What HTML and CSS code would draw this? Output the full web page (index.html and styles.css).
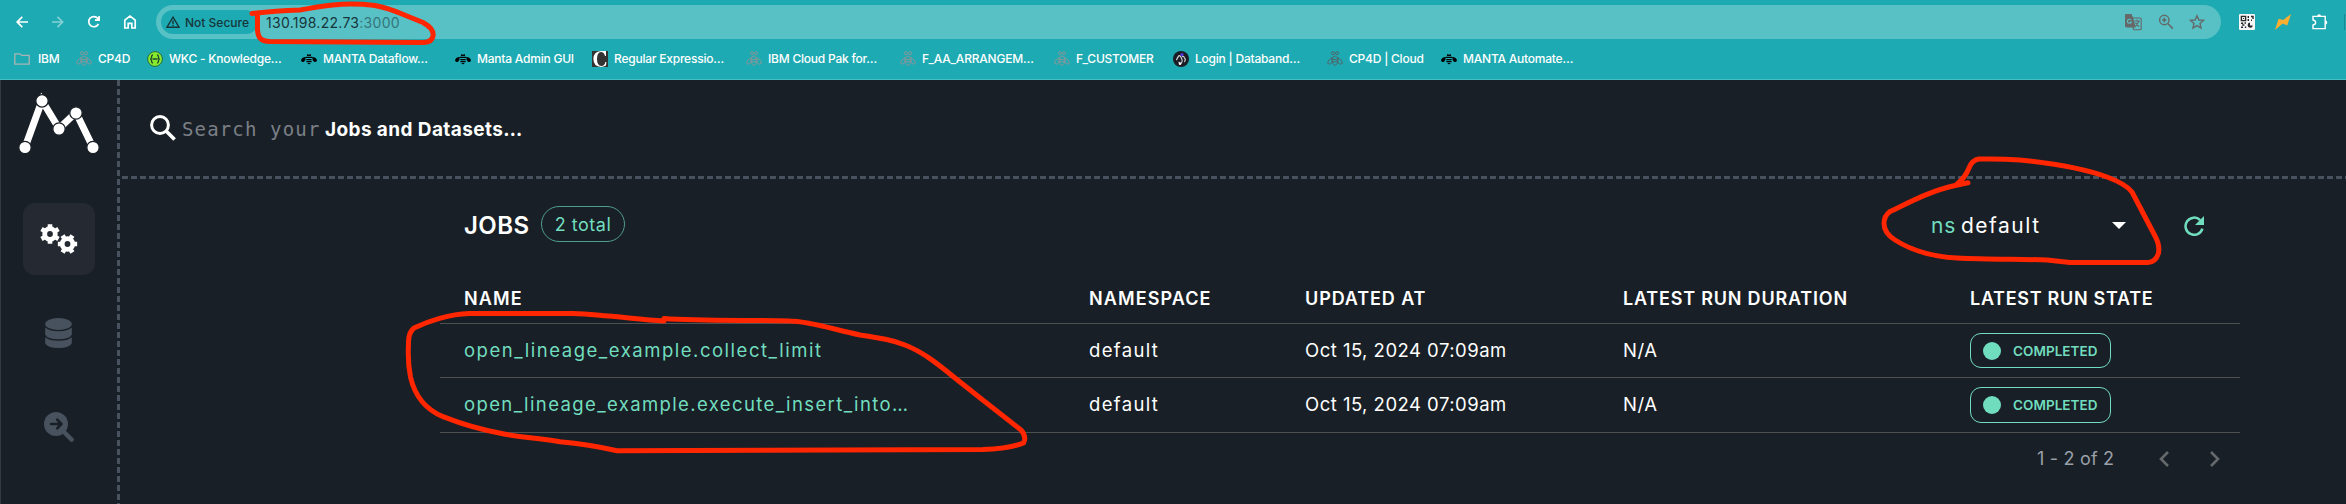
FILE: index.html
```html
<!DOCTYPE html>
<html lang="en">
<head>
<meta charset="utf-8">
<title>Marquez | Jobs</title>
<link rel="stylesheet" href="styles.css">
</head>
<body>
<svg class="defs" aria-hidden="true">
  <symbol id="bee" viewBox="0 0 16 16">
    <g fill="none" stroke="currentColor" stroke-width="1">
      <circle cx="5.9" cy="2.2" r="1.5"/><circle cx="10.1" cy="2.2" r="1.5"/>
      <path d="M5.7 6.2Q8 3.6 10.3 6.2V12.4Q8 16.2 5.7 12.4ZM5.7 8.4H10.3M5.7 10.8H10.3"/>
      <path d="M5 6.6Q.7 8.8.6 12.2Q2.8 14.6 4.9 11.6ZM11 6.6Q15.3 8.8 15.4 12.2Q13.2 14.6 11.1 11.6Z"/>
    </g>
  </symbol>
  <symbol id="manta" viewBox="0 0 16 16">
    <path fill="#000" d="M6 3.2H7.3L8 4.2L8.7 3.2H10V5H6ZM4.8 5.8H11.2V7H4.8ZM5.4 8H10.6V9.2H5.4ZM5.4 10.1H10.6V11.2H5.4ZM6.2 12H9.8L8 13.4ZM4.6 6Q.6 6.2 0 9.6Q1.2 12 3.2 10.6Q5 9 4.6 6ZM11.4 6Q15.4 6.2 16 9.6Q14.8 12 12.8 10.6Q11 9 11.4 6Z"/>
  </symbol>
  <symbol id="gear" viewBox="-10 -10 20 20">
    <circle r="5.3" fill="none" stroke="#fff" stroke-width="4.8"/>
    <path stroke="#fff" stroke-width="4.6" fill="none" d="M0-7V-9.8M0 7V9.8M6.06-3.5L8.5-4.9M-6.06-3.5L-8.5-4.9M6.06 3.5L8.5 4.9M-6.06 3.5L-8.5 4.9"/>
  </symbol>
</svg>

<header class="browser">
  <div class="toolbar">
    <nav class="nav-buttons">
      <svg viewBox="0 0 16 16"><path d="M14 8H3M8.3 2.9L3.2 8L8.3 13.1"/></svg>
      <svg class="faded" viewBox="0 0 16 16"><path d="M2 8H12.4M7.5 2.9L12.6 8L7.5 13.1"/></svg>
      <svg viewBox="0 0 16 16"><path d="M12.4 10A5.1 5.1 0 1 1 11.8 4.4L13 5.9M13.1 2V6.2H8.9"/></svg>
      <svg viewBox="0 0 16 16"><path d="M2.8 14V6.2L8 2.1L13.2 6.2V14H9.8V9.4H6.2V14Z"/></svg>
    </nav>
    <div class="omnibox">
      <span class="chip">
        <svg viewBox="0 0 14 12"><path d="M7 1.2L13 11.2H1Z"/><path d="M7 4.5V8M7 8.8V10"/></svg>
        Not Secure
      </span>
      <span class="url">130.198.22.73<span class="port">:3000</span></span>
      <span class="page-actions">
        <svg viewBox="0 0 17 17"><path fill="#66696a" d="M0 2Q0 0 2 0H6L7 3H0ZM0 3H7.4L10 13H2Q0 13 0 11Z"/><path d="M8 4H15.2Q16.2 4 16.2 5V14.8Q16.2 15.8 15.2 15.8H8.8L7.8 13M9.2 7H14.8M12 5.5V7M10.4 12.4L14 7.4M10.4 8.6L14.3 12.8"/><path class="light" d="M6 6A2 2 0 1 0 6.3 8H4.7"/></svg>
        <svg viewBox="0 0 16 16"><circle cx="6.3" cy="6" r="4.7"/><path stroke-width="1.7" d="M9.8 9.5L14.8 14.6M6.3 3.8V8.2M4.1 6H8.5"/></svg>
        <svg viewBox="0 0 16 16"><path d="M8 1.7L9.9 6L14.5 6.4L11 9.5L12 14L8 11.6L4 14L5 9.5L1.5 6.4L6.1 6Z"/></svg>
      </span>
    </div>
    <div class="extensions">
      <svg viewBox="0 0 16 16"><rect width="16" height="16" rx="1" fill="#f6f6f6"/><path fill="none" stroke="#26282a" stroke-width="1.4" d="M2.4 2.4H6.6V6.6H2.4ZM9.3 2V4M9.3 5V7M12 2.5H14V5M12 6.2H13M2 9.3H4.2M5.5 9H7M3.2 11H5.4M2 13.2H4M5.8 13.2H7.2"/><path fill="#26282a" d="M4 4H5V5H4ZM11 8.6A2.6 2.6 0 1 0 13.8 11.4H11Z"/></svg>
      <svg viewBox="0 0 16 16"><path fill="#fbae2f" d="M0 16L3.6 4.8L8.2 6L16 0L12.2 11.6L7.8 9.4Z"/></svg>
      <svg viewBox="0 0 16 16"><path fill="none" stroke="#fff" stroke-width="1.4" d="M1 2.4H13.2V14.6H1V11Q3.6 10.6 3.6 8.5Q3.6 6.4 1 6Z"/><path fill="#fff" d="M5.2 2.2A1.9 1.9 0 0 1 9 2.2ZM13.4 6.6A1.9 1.9 0 0 1 13.4 10.4Z"/></svg>
      <i class="avatar-edge"></i>
    </div>
  </div>
  <div class="bookmarks">
    <a class="bm w62"><svg viewBox="0 0 16 16"><path fill="none" stroke="#a9b5b4" stroke-width="1.3" d="M.8 2.8H6L7.6 4.4H15.2V13.2H.8Z"/></svg>IBM</a>
    <a class="bm w71"><svg class="bee"><use href="#bee"/></svg>CP4D</a>
    <a class="bm w154"><svg viewBox="0 0 16 16"><circle cx="8" cy="8" r="7.4" fill="#85ea2d" stroke="#256b45" stroke-width="1"/><path fill="none" stroke="#23492d" stroke-width="1.3" d="M6 4Q4.6 4 4.6 5.4Q4.6 8 3.2 8Q4.6 8 4.6 10.6Q4.6 12 6 12M10 4Q11.4 4 11.4 5.4Q11.4 8 12.8 8Q11.4 8 11.4 10.6Q11.4 12 10 12M5.5 8H10.6"/></svg>WKC - Knowledge…</a>
    <a class="bm w154"><svg><use href="#manta"/></svg>MANTA Dataflow…</a>
    <a class="bm w137"><svg><use href="#manta"/></svg>Manta Admin GUI</a>
    <a class="bm w154"><svg viewBox="0 0 16 16"><path fill="#333" d="M0 0H16V16H0Z"/><path fill="#fff" d="M14 0V5H13Q12 1 9 1Q5 1.4 5 8Q5 14.6 9.4 15Q12.6 15 13.4 11H14.4L14 14.6Q12 16 9 16Q1.4 15.4 1.4 8Q1.4 .6 9 0Z"/></svg>Regular Expressio…</a>
    <a class="bm w154"><svg class="bee"><use href="#bee"/></svg>IBM Cloud Pak for…</a>
    <a class="bm w154"><svg class="bee"><use href="#bee"/></svg>F_AA_ARRANGEM…</a>
    <a class="bm w119"><svg class="bee"><use href="#bee"/></svg>F_CUSTOMER</a>
    <a class="bm w154"><svg viewBox="0 0 16 16"><circle cx="8" cy="8" r="8" fill="#1c1c24"/><path fill="none" stroke="#cfcfd6" stroke-width="1.2" stroke-linecap="round" d="M3.6 8.6L5.2 5.6Q6.4 3.8 7.6 5.6L8.6 7.6Q9.6 9.6 9 10.8L8 12.2Q6.8 13 6 11.2M9.6 5.6Q10.6 5 11.4 6.8L12.4 8.6L11.6 10.6"/><circle cx="9" cy="3.5" r="1.5" fill="#5b36e8"/><circle cx="7" cy="12.8" r="1.3" fill="#fff"/></svg>Login | Databand…</a>
    <a class="bm w114"><svg class="bee dark"><use href="#bee"/></svg>CP4D | Cloud</a>
    <a class="bm w154"><svg><use href="#manta"/></svg>MANTA Automate…</a>
  </div>
</header>

<div class="app">
  <aside class="sidebar">
    <svg class="logo" viewBox="0 0 80 60"><path fill="none" stroke="#fff" stroke-width="7" d="M6 52.5L23 5.5L40 33.5L57 17.5L74 52.5"/><g fill="#fff" stroke="#191f26" stroke-width="1.3"><circle cx="6" cy="52.5" r="6.2"/><circle cx="23" cy="5.9" r="6.2"/><circle cx="40" cy="34" r="6.2"/><circle cx="57" cy="18" r="6.2"/><circle cx="74" cy="52.5" r="6.2"/></g></svg>
    <a class="side-link active"><svg viewBox="0 0 38 32"><use href="#gear" x="0" y="1" width="20" height="20"/><g transform="rotate(90 27.5 21)"><use href="#gear" x="17.5" y="11" width="20" height="20"/></g></svg></a>
    <a class="side-link"><svg class="db" viewBox="0 0 27 30"><ellipse cx="13.5" cy="6" rx="13.3" ry="6"/><path d="M.2 9.6Q4 13.2 13.5 13.2T26.8 9.6V16.6Q25 21.3 13.5 21.3T.2 16.6ZM.2 19.2Q4 22.8 13.5 22.8T26.8 19.2V25.2Q25 30 13.5 30T.2 25.2Z"/></svg></a>
    <a class="side-link"><svg class="find" viewBox="0 0 30 30"><circle cx="12" cy="12" r="12"/><path stroke="#47525e" stroke-width="4.4" stroke-linecap="round" d="M20 20L27.6 27.6"/><path fill="none" stroke="#191f26" stroke-width="2.6" stroke-linecap="round" stroke-linejoin="round" d="M7 12H17M13.2 7.6L17.4 12L13.2 16.4"/></svg></a>
  </aside>

  <main class="main">
    <div class="search">
      <svg viewBox="0 0 26 26"><circle cx="10" cy="10" r="8.4" fill="none" stroke="#fff" stroke-width="3"/><path stroke="#fff" stroke-width="3.6" d="M15.6 15.6L24.6 24.6"/></svg>
      <span class="hint">Search your</span><b>Jobs and Datasets…</b>
    </div>

    <section class="jobs">
      <div class="title-row">
        <h1>JOBS</h1>
        <span class="total">2 total</span>
        <div class="ns-select"><span class="ns">ns</span><span class="ns-name">default</span><i class="caret"></i></div>
        <svg class="refresh" viewBox="0 0 20 20"><path fill="none" stroke="#71ddbf" stroke-width="2.5" d="M18.4 12.6A8.6 8.6 0 1 1 16.2 4.1"/><path fill="#71ddbf" d="M20 0V9H11Z"/></svg>
      </div>

      <div class="table">
        <div class="row head"><span class="h-name">NAME</span><span class="h-ns">NAMESPACE</span><span>UPDATED AT</span><span class="h-dur">LATEST RUN DURATION</span><span class="h-state">LATEST RUN STATE</span></div>
        <div class="row">
          <a class="job">open_lineage_example.collect_limit</a><span class="cell-ns">default</span><span class="date">Oct 15, 2024 07:09am</span><span class="na">N/A</span>
          <span class="state-cell"><em class="state"><i></i>COMPLETED</em></span>
        </div>
        <div class="row last">
          <a class="job long">open_lineage_example.execute_insert_into…</a><span class="cell-ns">default</span><span class="date">Oct 15, 2024 07:09am</span><span class="na">N/A</span>
          <span class="state-cell"><em class="state tall"><i></i>COMPLETED</em></span>
        </div>
      </div>

      <div class="pager">
        <span>1 - 2 of 2</span>
        <svg viewBox="0 0 10 16"><path d="M9 1L2 8L9 15"/></svg>
        <svg viewBox="0 0 10 16"><path d="M1 1L8 8L1 15"/></svg>
      </div>
    </section>
  </main>
</div>

<svg class="marker" viewBox="0 0 2346 504" aria-hidden="true">
  <path d="M252 13.5C270 11.5 288 10.5 300 10C312 8 322 6 333 5Q353 3 375 5.5C388 8 395 11 402 14L423 22.5C431 27 434 31 433 36Q432 42 424 42.5L270 41.5C260 41 258 37 257.5 30V14"/>
  <path d="M664 318.5C700 321 745 320 790 321C808 321 832 329 860 335C880 338 893 340 905 345C923 352 938 364 955 378L984 401L1021 430Q1027 437 1023.500 443C1013 447 997 449 983 449.500L617 450.700C592 445 575 443 560 441.700C537 438 520 437 504 434C481 430 459 423 443 416.700C427 410 415 397 410.500 377Q407.500 362 408.500 344Q408 333 414 328C428 321 450 314 469 313.500H573C607 315 635 319 664 321"/>
  <path d="M1968 182.700L1955 185.500C1930 191 1910 202 1890 211.500Q1884 216 1884 223.500Q1884 233 1895 240C1914 252 1938 257 1957 258C1990 259.500 2020 259 2047 260L2070 262.500H2148Q2156 262 2158.500 253Q2160 245 2155 236L2143 213L2132 192Q2126 184 2107 177C2082 168 2050 163 2020 160Q2000 158.500 1979 159Q1972 160 1969 168Q1965 178 1957 184"/>
</svg>
</body>
</html>
```
FILE: styles.css
```css
* { box-sizing: border-box; }
body {
  margin: 0;
  width: 2346px;
  height: 504px;
  overflow: hidden;
  position: relative;
  background: #191f26;
  color: #fff;
  font-family: Inter, "Liberation Sans", sans-serif;
}
svg { display: block; flex: none; }
.defs { position: absolute; width: 0; height: 0; }

/* browser chrome */
.browser { height: 80px; background: #1eaab2; border-bottom: 1px solid #43c0c5; }
.toolbar { display: flex; height: 44px; align-items: center; }
.nav-buttons { display: flex; flex: none; width: 156px; padding-left: 14px; gap: 20px; }
.nav-buttons svg { width: 16px; height: 16px; fill: none; stroke: #fff; stroke-width: 1.7; }
.nav-buttons .faded { opacity: .45; }
.omnibox {
  display: flex;
  flex: none;
  align-items: center;
  width: 2065px;
  height: 34px;
  padding: 0 16px 0 5px;
  border-radius: 17px;
  background: #57c1c5;
}
.chip {
  display: flex;
  align-items: center;
  gap: 5px;
  width: 97px;
  height: 24px;
  padding-left: 5px;
  border-radius: 12px;
  background: #1eaab2;
  color: #17353a;
  font-size: 12px;
  font-weight: 500;
  white-space: nowrap;
}
.chip svg { width: 14px; height: 12px; fill: none; stroke: #17353a; stroke-width: 1.4; }
.url { margin-left: 8px; color: #17353a; font-size: 14px; letter-spacing: .28px; }
.port { color: #35757a; }
.page-actions { display: flex; gap: 15.500px; align-items: center; margin-left: auto; }
.page-actions svg { width: 16px; height: 16px; fill: none; stroke: #66696a; stroke-width: 1.4; }
.page-actions svg:first-child { width: 17px; height: 17px; stroke-width: 1.1; }
.page-actions .light { stroke: #57c1c5; }
.extensions { display: flex; flex: none; width: 125px; gap: 20px; padding-left: 18px; align-items: center; }
.extensions svg { width: 16px; height: 16px; }
.extensions svg:nth-child(3) { margin-left: 1px; }
.avatar-edge { flex: none; width: 1px; height: 16px; margin-left: -4px; background: #158a92; }
.bookmarks { display: flex; height: 29px; align-items: center; padding-left: 14px; }
.bm { display: flex; align-items: center; gap: 6px; font-size: 12px; font-weight: 500; letter-spacing: -.220px; white-space: nowrap; }
.bm svg { width: 16px; height: 16px; }
.bee { color: #85979a; }
.bee.dark { color: #4e686d; }
.w62 { width: 62px; gap: 8px; }
.w71 { width: 71px; }
.w114 { width: 114px; }
.w119 { width: 119px; }
.w137 { width: 137px; }
.w154 { width: 154px; }

/* application */
.app { display: flex; height: 424px; }
.sidebar {
  width: 120px;
  padding-top: 15px;
  border-left: 1px solid #343a42;
  background: repeating-linear-gradient(#47525e 0 6px, transparent 6px 9px) right 0 / 3px 100% no-repeat;
}
.logo { width: 80px; height: 60px; margin-left: 18px; overflow: visible; }
.side-link { display: flex; align-items: center; justify-content: center; width: 72px; height: 72px; margin: 0 0 22px 22px; padding-right: 1px; border-radius: 12px; fill: #47525e; }
.side-link.active { margin-top: 48px; padding-right: 0; background: #252a32; }
.active svg { width: 38px; height: 32px; }
.db { width: 27px; height: 30px; }
.find { width: 30px; height: 30px; }

.main { flex: 1; }
.search {
  display: flex;
  align-items: center;
  height: 99px;
  margin-left: 2px;
  padding: 0 0 3px 28px;
  background: repeating-linear-gradient(90deg, #47525e 0 6px, transparent 6px 9px) 0 96px / 100% 3px no-repeat;
}
.search svg { width: 26px; height: 26px; }
.hint { width: 143px; margin-left: 6px; padding-top: 2px; color: #7b8087; font: 19px "DejaVu Sans Mono", monospace; letter-spacing: 1.150px; }
.search b { padding-top: 3px; font-size: 19px; font-weight: 700; letter-spacing: .400px; }

.jobs { margin-left: 320px; width: 1800px; }
.title-row { display: flex; align-items: center; height: 95px; padding: 0 36px 6px 24px; }
.title-row h1 { width: 77px; margin: 3px 0 0; font-size: 24px; font-weight: 600; letter-spacing: .4px; }
.total { width: 84px; height: 36px; border: 1px solid #4f9d8d; border-radius: 18px; color: #71ddbf; font-size: 18px; letter-spacing: .5px; line-height: 35px; text-align: center; }
.ns-select { display: flex; align-items: center; width: 253px; margin-left: auto; padding-top: 3px; font-size: 21px; }
.ns { width: 30px; color: #71ddbf; letter-spacing: .8px; }
.ns-name { width: 151px; letter-spacing: 1.500px; }
.caret { border: 7px solid transparent; border-top-color: #fff; border-bottom: 0; }
.refresh { width: 20px; height: 20px; margin-top: 5px; }

.row {
  display: grid;
  grid-template-columns: 625px 216px 318px 347px 294px;
  align-items: center;
  height: 54px;
  border-bottom: 1px solid #4f5151;
  font-size: 18.500px;
  white-space: nowrap;
}
.row > * { padding: 0 0 2px 24px; }
.row.head { height: 50px; font-size: 18px; font-weight: 600; letter-spacing: .900px; }
.row.head > * { padding-bottom: 0; }
.row.head > .h-name { letter-spacing: 1.100px; }
.row.last { height: 55px; }
.row .h-ns { letter-spacing: 1.100px; }
.row .h-dur { letter-spacing: .800px; }
.row .h-state { letter-spacing: .700px; }
.row > .state-cell { padding-bottom: 0; }
.job { color: #71ddbf; letter-spacing: 1.520px; }
.job.long { letter-spacing: 1.380px; }
.cell-ns { letter-spacing: 1.350px; }
.date { letter-spacing: .480px; }
.na { letter-spacing: .600px; }
.state {
  display: flex;
  align-items: center;
  width: 141px;
  height: 35px;
  padding-left: 12px;
  gap: 12px;
  border: 1px solid #71ddbf;
  border-radius: 11px;
  color: #71ddbf;
  font-size: 13.500px;
  font-style: normal;
  font-weight: 600;
  letter-spacing: .050px;
}
.state.tall { height: 36px; }
.state i { width: 18px; height: 18px; border-radius: 50%; background: #71ddbf; }

.pager { display: flex; align-items: center; height: 52px; padding-left: 1597px; color: #9aa0a8; font-size: 18px; letter-spacing: .200px; }
.pager span { width: 122px; padding-bottom: 1px; }
.pager svg { width: 10px; height: 16px; fill: none; stroke: #66696c; stroke-width: 2.600; }
.pager svg + svg { margin-left: 41px; }

/* freehand marker strokes above the page */
.marker { position: absolute; inset: 0; width: 2346px; height: 504px; fill: none; stroke: #ff2600; stroke-width: 5; stroke-linejoin: round; stroke-linecap: round; pointer-events: none; }
```
